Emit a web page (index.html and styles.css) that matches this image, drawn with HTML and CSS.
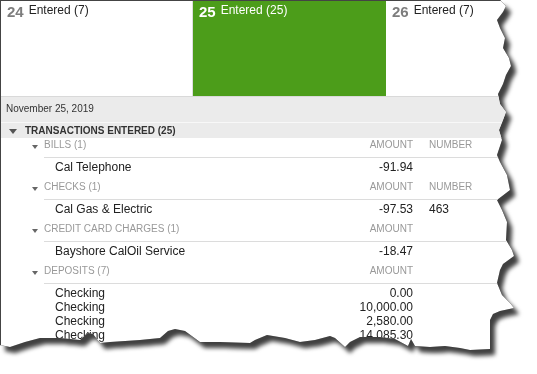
FILE: index.html
```html
<!DOCTYPE html>
<html lang="en">
<head>
  <meta charset="UTF-8" />
  <title>Entered transactions</title>
  <link rel="stylesheet" href="styles.css">
</head>
<body>

  <div class="sheet">
    <div class="page">

      <div class="days">
        <div class="day">
          <span class="day-num">24</span>
          <span class="day-label">Entered (7)</span>
        </div>
        <div class="day day-active">
          <span class="day-num">25</span>
          <span class="day-label">Entered (25)</span>
        </div>
        <div class="day day-last">
          <span class="day-num">26</span>
          <span class="day-label">Entered (7)</span>
        </div>
      </div>

      <div class="date-bar">November 25, 2019</div>

      <div class="section-head">
        <span class="caret caret-lg"></span>
        TRANSACTIONS ENTERED (25)
      </div>

      <div class="groups">
        <div class="group">
          <div class="group-head">
            <span class="caret-box"><span class="caret"></span></span>
            <div class="cols head-cols">
              <span>BILLS (1)</span>
              <span class="amt">AMOUNT</span>
              <span>NUMBER</span>
            </div>
          </div>
          <div class="items">
            <div class="cols row"><span class="name">Cal Telephone</span><span class="amt">-91.94</span><span></span></div>
          </div>
        </div>

        <div class="group">
          <div class="group-head">
            <span class="caret-box"><span class="caret"></span></span>
            <div class="cols head-cols">
              <span>CHECKS (1)</span>
              <span class="amt">AMOUNT</span>
              <span>NUMBER</span>
            </div>
          </div>
          <div class="items">
            <div class="cols row"><span class="name">Cal Gas &amp; Electric</span><span class="amt">-97.53</span><span>463</span></div>
          </div>
        </div>

        <div class="group">
          <div class="group-head">
            <span class="caret-box"><span class="caret"></span></span>
            <div class="cols head-cols">
              <span>CREDIT CARD CHARGES (1)</span>
              <span class="amt">AMOUNT</span>
              <span></span>
            </div>
          </div>
          <div class="items">
            <div class="cols row"><span class="name">Bayshore CalOil Service</span><span class="amt">-18.47</span><span></span></div>
          </div>
        </div>

        <div class="group">
          <div class="group-head">
            <span class="caret-box"><span class="caret"></span></span>
            <div class="cols head-cols">
              <span>DEPOSITS (7)</span>
              <span class="amt">AMOUNT</span>
              <span></span>
            </div>
          </div>
          <div class="items">
            <div class="cols row"><span class="name">Checking</span><span class="amt">0.00</span><span></span></div>
            <div class="cols row"><span class="name">Checking</span><span class="amt">10,000.00</span><span></span></div>
            <div class="cols row"><span class="name">Checking</span><span class="amt">2,580.00</span><span></span></div>
            <div class="cols row"><span class="name">Checking</span><span class="amt">14,085.30</span><span></span></div>
          </div>
        </div>
      </div>

    </div>
  </div>

</body>
</html>
```

FILE: styles.css
```css
body {
  margin: 0;
  background: #fff;
  font-family: "Liberation Sans", Arial, sans-serif;
  color: #222;
}

/* torn paper look: outline + soft shadow follow the clipped page */
.sheet {
  width: 537px;
  height: 374px;
  filter: drop-shadow(0 0 0.6px rgba(0, 0, 0, 0.9)) drop-shadow(5px 6px 2px rgba(0, 0, 0, 0.75));
}

.page {
  box-sizing: border-box;
  width: 537px;
  height: 374px;
  overflow: hidden;
  background: #fff;
  border-top: 1px solid #444;
  border-left: 1px solid #444;
  clip-path: polygon(
    0 0, 500px 0, 506px 6px, 503px 12px, 497px 20px, 500px 28px, 505px 38px,
    503px 48px, 509px 58px, 511px 66px, 506px 75px, 503px 84px, 498px 94px,
    500px 104px, 506px 112px, 503px 120px, 499px 130px, 502px 140px, 497px 155px,
    500px 162px, 507px 175px, 510px 190px, 497px 200px, 502px 210px, 507px 222px,
    506px 240px, 512px 250px, 514px 256px, 503px 264px, 500px 270px, 497px 283px,
    502px 295px, 510px 303px, 514px 308px, 500px 311px, 493px 314px, 490px 320px,
    490px 349px, 470px 350px, 460px 348px, 445px 346px, 430px 347px, 415px 346px,
    411px 339px, 408px 346px, 395px 339px, 380px 337px, 360px 337px, 350px 342px,
    345px 347px, 335px 338px, 330px 336px, 315px 340px, 300px 342px, 285px 338px,
    267px 335px, 255px 340px, 250px 343px, 220px 342px, 200px 342px, 185px 331px,
    175px 329px, 168px 331px, 160px 338px, 140px 340px, 110px 342px, 100px 343px,
    93px 334px, 88px 333px, 80px 340px, 60px 338px, 40px 338px, 25px 342px,
    10px 347px, 0 345px
  );
}

.days {
  display: flex;
  height: 95px;
  border-bottom: 1px solid #d9d9d9;
}

.day {
  box-sizing: border-box;
  width: 192px;
  padding: 2px 6px;
  display: flex;
  align-items: flex-start;
  gap: 5px;
  border-right: 1px solid #dedede;
}

.day-active {
  width: 193px;
  background: #4c9d1a;
  border-right: none;
  color: #fff;
}

.day-last {
  flex: 1;
  border-right: none;
}

.day-num {
  font-size: 15px;
  line-height: 18px;
  font-weight: bold;
  color: #7d7d7d;
}

.day-label {
  font-size: 12px;
  line-height: 14px;
}

.day-active .day-num,
.day-active .day-label {
  color: #fff;
}

.date-bar {
  height: 25px;
  line-height: 24px;
  padding-left: 5px;
  font-size: 10px;
  color: #333;
  background: #ebebeb;
  border-bottom: 1px solid #f8f8f8;
}

.section-head {
  display: flex;
  align-items: center;
  height: 15px;
  padding-left: 7px;
  font-size: 10px;
  font-weight: bold;
  color: #333;
  background: #ebebeb;
}

.caret {
  display: inline-block;
  width: 0;
  height: 0;
  border-left: 3px solid transparent;
  border-right: 3px solid transparent;
  border-top: 4px solid #666;
}

.caret-lg {
  border-left-width: 4px;
  border-right-width: 4px;
  border-top-width: 5px;
  border-top-color: #555;
  margin: 2px 8px 0 1px;
}

.group {
  padding-left: 31px;
}

.group-head {
  display: flex;
  align-items: flex-start;
}

.caret-box {
  flex: 0 0 12px;
  padding-top: 8px;
  line-height: 0;
}

.group:first-child .caret-box {
  padding-top: 6px;
}

.cols {
  display: grid;
  grid-template-columns: 284px 69px 108px;
  column-gap: 16px;
}

.head-cols {
  flex: 1;
  padding: 3px 0 6px;
  font-size: 10px;
  line-height: 12px;
  color: #999;
  border-bottom: 1px solid #dcdcdc;
}

.group:first-child .head-cols {
  padding-top: 1px;
}

.items {
  margin-left: 12px;
  padding: 2px 0 4px;
}

.row {
  font-size: 12px;
  line-height: 14px;
  color: #222;
}

.name {
  padding-left: 11px;
}

.amt {
  text-align: right;
}
```
